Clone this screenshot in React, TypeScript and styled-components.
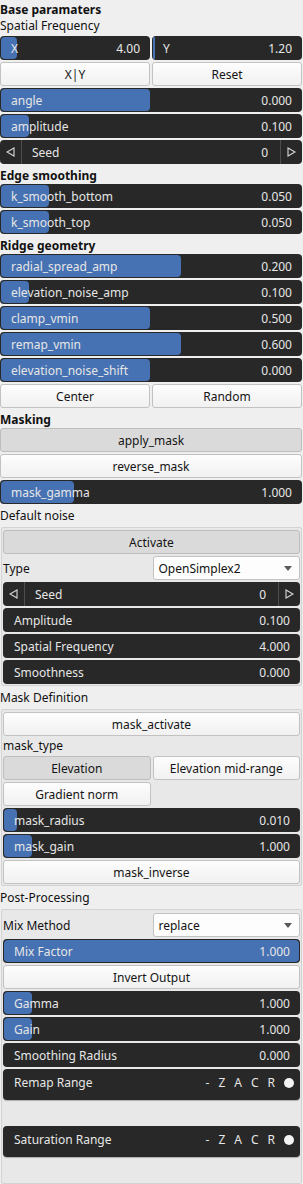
import React from "react";
import styled, { createGlobalStyle } from "styled-components";

const Global = createGlobalStyle`
  html, body { margin: 0; padding: 0; background: #efefef; }
  body {
    font-family: "Noto Sans", "Open Sans", sans-serif;
    font-size: 12px;
    color: #111;
  }
`;

const Page = styled.div`
  width: 302px;
  display: flex;
  flex-direction: column;
  gap: 2px;
`;

const Heading = styled.div`
  font-weight: 700;
  height: 16px;
  line-height: 19px;
`;

const Label = styled.div<{ $h?: number }>`
  height: ${(p) => p.$h ?? 16}px;
  line-height: ${(p) => p.$h ?? 16}px;
`;

const Frame = styled.div<{ $pt?: number }>`
  margin-left: 1px;
  display: flex;
  flex-direction: column;
  gap: 2px;
  background: #e8e8e8;
  border: 1px solid #d3d3d3;
  border-radius: 2px;
  padding: ${(p) => p.$pt ?? 2}px 1px 1px 1px;
`;

const Pair = styled.div`
  display: grid;
  grid-template-columns: 1fr 1fr;
  gap: 2px;
`;

const SliderBox = styled.div`
  display: grid;
  height: 24px;
  background: #282828;
  border-radius: 4px;
  color: #e6e6e6;
  overflow: hidden;
`;

const Fill = styled.div`
  grid-area: 1 / 1;
  justify-self: start;
  margin: 1px 0 1px 1px;
  background: #4672b3;
  border-radius: 4px;
`;

const SliderContent = styled.div<{ $pl?: number }>`
  grid-area: 1 / 1;
  display: flex;
  align-items: center;
  justify-content: space-between;
  padding: 0 10px 0 ${(p) => p.$pl ?? 11}px;
  white-space: nowrap;
`;

type SliderProps = { label: string; value: string; fill: number | "full"; pl?: number };

function Slider({ label, value, fill, pl }: SliderProps) {
  const w = fill === "full" ? "calc(100% - 2px)" : `${fill}px`;
  return (
    <SliderBox>
      <Fill style={{ width: w }} />
      <SliderContent $pl={pl}>
        <span>{label}</span>
        <span>{value}</span>
      </SliderContent>
    </SliderBox>
  );
}

const Spin = styled.div`
  display: flex;
  height: 24px;
  background: #282828;
  border-radius: 4px;
  color: #e6e6e6;
`;

const SpinArrow = styled.div<{ $right?: boolean }>`
  width: 21px;
  display: flex;
  align-items: center;
  justify-content: center;
  ${(p) => (p.$right ? "border-left" : "border-right")}: 1px solid #4d4d4d;
`;

const SpinBody = styled.div`
  flex: 1;
  display: flex;
  align-items: center;
  justify-content: space-between;
  padding: 0 12px 0 10px;
`;

function Tri({ dir }: { dir: "l" | "r" }) {
  return (
    <svg width="9" height="10" viewBox="0 0 9 10">
      {dir === "l" ? (
        <polygon points="8,1 8,9 1,5" fill="none" stroke="#d8d8d8" strokeWidth="1.1" />
      ) : (
        <polygon points="1,1 1,9 8,5" fill="none" stroke="#d8d8d8" strokeWidth="1.1" />
      )}
    </svg>
  );
}

function SeedSpin() {
  return (
    <Spin>
      <SpinArrow>
        <Tri dir="l" />
      </SpinArrow>
      <SpinBody>
        <span>Seed</span>
        <span>0</span>
      </SpinBody>
      <SpinArrow $right>
        <Tri dir="r" />
      </SpinArrow>
    </Spin>
  );
}

const Btn = styled.button<{ $on?: boolean }>`
  height: 24px;
  margin: 0;
  padding: 0;
  font: inherit;
  color: #141414;
  border: 1px solid ${(p) => (p.$on ? "#bdbdbd" : "#c2c2c2")};
  border-radius: 3px;
  background: ${(p) => (p.$on ? "#dadada" : "linear-gradient(#fdfdfd, #f1f1f1)")};
`;

const FieldRow = styled.div`
  display: grid;
  grid-template-columns: 1fr 1fr;
  gap: 2px;
  align-items: center;
  height: 24px;
`;

const Combo = styled.div`
  height: 24px;
  box-sizing: border-box;
  display: flex;
  align-items: center;
  justify-content: space-between;
  padding: 0 7px 0 5px;
  background: #fdfdfd;
  border: 1px solid #c2c2c2;
  border-radius: 3px;
`;

function Caret() {
  return (
    <svg width="8" height="5" viewBox="0 0 8 5">
      <polygon points="0,0 8,0 4,5" fill="#5a5a5a" />
    </svg>
  );
}

const RangeRow = styled.div`
  height: 31px;
  box-sizing: border-box;
  display: flex;
  align-items: flex-start;
  justify-content: space-between;
  padding: 5px 6px 0 11px;
  line-height: 17px;
  background: #282828;
  border-radius: 4px;
  color: #e6e6e6;
  box-shadow: 0 1px 1px rgba(0, 0, 0, 0.25);
`;

const Flags = styled.div`
  display: flex;
  align-items: center;
  gap: 9px;
  height: 17px;
`;

const Dot = styled.span`
  width: 10px;
  height: 10px;
  border-radius: 50%;
  background: #f4f4f4;
`;

const Spacer = styled.div<{ $h: number }>`
  height: ${(p) => p.$h}px;
`;

function Range({ label }: { label: string }) {
  return (
    <RangeRow>
      <span>{label}</span>
      <Flags>
        <span>-</span>
        <span>Z</span>
        <span>A</span>
        <span>C</span>
        <span>R</span>
        <Dot />
      </Flags>
    </RangeRow>
  );
}

export default function App() {
  return (
    <>
      <Global />
      <Page>
        <Heading>Base paramaters</Heading>
        <Label>Spatial Frequency</Label>
        <Pair>
          <Slider label="X" value="4.00" fill={16} pl={11} />
          <Slider label="Y" value="1.20" fill={2} pl={11} />
        </Pair>
        <Pair>
          <Btn>X|Y</Btn>
          <Btn>Reset</Btn>
        </Pair>
        <Slider label="angle" value="0.000" fill={149} />
        <Slider label="amplitude" value="0.100" fill={28} />
        <SeedSpin />
        <Heading>Edge smoothing</Heading>
        <Slider label="k_smooth_bottom" value="0.050" fill={48} />
        <Slider label="k_smooth_top" value="0.050" fill={48} />
        <Heading>Ridge geometry</Heading>
        <Slider label="radial_spread_amp" value="0.200" fill={180} />
        <Slider label="elevation_noise_amp" value="0.100" fill={28} />
        <Slider label="clamp_vmin" value="0.500" fill={149} />
        <Slider label="remap_vmin" value="0.600" fill={180} />
        <Slider label="elevation_noise_shift" value="0.000" fill={149} />
        <Pair>
          <Btn>Center</Btn>
          <Btn>Random</Btn>
        </Pair>
        <Heading>Masking</Heading>
        <Btn $on>apply_mask</Btn>
        <Btn>reverse_mask</Btn>
        <Slider label="mask_gamma" value="1.000" fill={73} />
        <Label $h={19}>Default noise</Label>
        <Frame>
          <Btn $on>Activate</Btn>
          <FieldRow>
            <span>Type</span>
            <Combo>
              <span>OpenSimplex2</span>
              <Caret />
            </Combo>
          </FieldRow>
          <SeedSpin />
          <Slider label="Amplitude" value="0.100" fill={0} />
          <Slider label="Spatial Frequency" value="4.000" fill={0} />
          <Slider label="Smoothness" value="0.000" fill={0} />
        </Frame>
        <Label $h={19}>Mask Definition</Label>
        <Frame>
          <Btn>mask_activate</Btn>
          <Label>mask_type</Label>
          <Pair>
            <Btn $on>Elevation</Btn>
            <Btn>Elevation mid-range</Btn>
            <Btn>Gradient norm</Btn>
          </Pair>
          <Slider label="mask_radius" value="0.010" fill={13} />
          <Slider label="mask_gain" value="1.000" fill={28} />
          <Btn>mask_inverse</Btn>
        </Frame>
        <Label $h={19}>Post-Processing</Label>
        <Frame $pt={3}>
          <FieldRow>
            <span>Mix Method</span>
            <Combo>
              <span>replace</span>
              <Caret />
            </Combo>
          </FieldRow>
          <Slider label="Mix Factor" value="1.000" fill="full" />
          <Btn>Invert Output</Btn>
          <Slider label="Gamma" value="1.000" fill={28} />
          <Slider label="Gain" value="1.000" fill={28} />
          <Slider label="Smoothing Radius" value="0.000" fill={0} />
          <Range label="Remap Range" />
          <Spacer $h={22} />
          <Range label="Saturation Range" />
          <Spacer $h={23} />
        </Frame>
      </Page>
    </>
  );
}
